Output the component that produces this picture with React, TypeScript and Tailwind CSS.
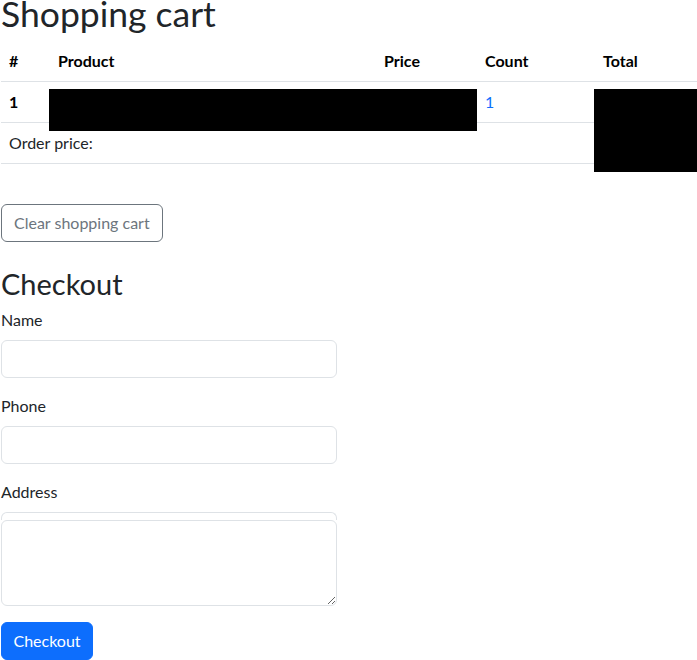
export default function App() {
  return (
    <div className="pl-px text-[#212529] text-[16px] leading-[24px]" style={{ fontFamily: 'Lato, "Noto Sans", sans-serif' }}>
      <h1 className="text-[35.5px] leading-[27px] font-normal mb-[14px]">Shopping cart</h1>

      <div className="relative w-[696px]">
        <table className="table-fixed w-[696px] border-collapse mb-4">
          <colgroup>
            <col className="w-[49px]" />
            <col className="w-[326px]" />
            <col className="w-[101px]" />
            <col className="w-[118px]" />
            <col className="w-[102px]" />
          </colgroup>
          <thead>
            <tr className="border-b border-[#dee2e6]">
              <th className="text-left font-bold text-black px-2 py-2">#</th>
              <th className="text-left font-bold text-black px-2 py-2">Product</th>
              <th className="text-left font-bold text-black px-2 py-2">Price</th>
              <th className="text-left font-bold text-black px-2 py-2">Count</th>
              <th className="text-left font-bold text-black px-2 py-2">Total</th>
            </tr>
          </thead>
          <tbody>
            <tr className="border-b border-[#dee2e6]">
              <th className="text-left font-bold text-black px-2 py-2">1</th>
              <td className="px-2 py-2"></td>
              <td className="px-2 py-2"></td>
              <td className="px-2 py-2 text-[#0d6efd]">1</td>
              <td className="px-2 py-2"></td>
            </tr>
            <tr className="border-b border-[#dee2e6]">
              <td colSpan={4} className="px-2 py-2">Order price:</td>
              <td className="px-2 py-2"></td>
            </tr>
          </tbody>
        </table>
        <div className="absolute left-[48px] top-[48px] w-[428px] h-[42px] bg-black" />
        <div className="absolute left-[593px] top-[48px] w-[104px] h-[83px] bg-black" />
      </div>

      <button className="mt-[24px] h-[38px] px-3 border border-[#6c757d] rounded-[6px] text-[#6c757d] bg-white">
        Clear shopping cart
      </button>

      <h2 className="mt-[25px] text-[29px] leading-[33px] font-normal mb-2">Checkout</h2>

      <form className="w-[336px]">
        <div className="mb-4">
          <label className="block mb-2">Name</label>
          <input type="text" className="block w-full h-[38px] px-3 border border-[#dee2e6] rounded-[6px] bg-white" />
        </div>
        <div className="mb-4">
          <label className="block mb-2">Phone</label>
          <input type="text" className="block w-full h-[38px] px-3 border border-[#dee2e6] rounded-[6px] bg-white" />
        </div>
        <div className="mb-4">
          <label className="block mb-2">Address</label>
          <div className="h-[8px] border-t border-x border-[#dee2e6] rounded-t-[6px]" />
          <textarea rows={3} className="block w-full h-[86px] px-3 py-[6px] border border-[#dee2e6] rounded-[6px] bg-white resize-y" />
        </div>
        <button type="button" className="h-[38px] w-[92px] rounded-[6px] bg-[#0d6efd] text-white border border-[#0d6efd]">
          Checkout
        </button>
      </form>
    </div>
  );
}
